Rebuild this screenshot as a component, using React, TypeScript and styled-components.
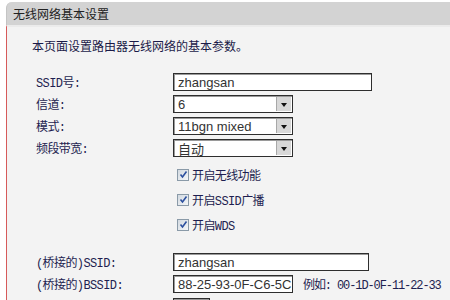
import * as React from 'react';
import styled, { createGlobalStyle } from 'styled-components';

const GlobalStyle = createGlobalStyle`
  html, body {
    margin: 0;
    padding: 0;
    background: #ffffff;
  }
  body {
    font-family: "Noto Sans CJK SC", sans-serif;
  }
`;

const Page = styled.div`
  width: 450px;
  height: 300px;
  overflow: hidden;
  padding: 2px 0 0 6px;
  box-sizing: border-box;
`;

const TitleBar = styled.div`
  height: 23px;
  display: flex;
  align-items: center;
  padding-left: 6px;
  background: #d3d3d3;
  border-top-left-radius: 6px;
  border-left: 1px solid #c4c4c4;
  font-size: 12px;
  color: #222;
`;

const Panel = styled.div`
  background: #f3f3f3;
  border-left: 1px solid #d65a5a;
  border-top: 2px solid #ebebeb;
  padding: 11px 0 0 25px;
  height: 280px;
  box-sizing: border-box;
`;

const Intro = styled.p`
  margin: 0;
  line-height: 16px;
  font-size: 12px;
  color: #1a1a48;
`;

const Form = styled.div`
  margin-top: 17px;
  padding-left: 4px;
  display: flex;
  flex-direction: column;
`;

const Row = styled.div<{ $h?: number }>`
  display: flex;
  align-items: center;
  height: ${(p) => p.$h ?? 22}px;
`;

const Label = styled.span`
  width: 137px;
  flex-shrink: 0;
  font-family: "Liberation Mono", "Noto Sans CJK SC", monospace;
  font-size: 12px;
  letter-spacing: -0.6px;
  color: #1e1e50;
`;

const Field = styled.div<{ $w: number; $bg?: string }>`
  width: ${(p) => p.$w}px;
  height: 18px;
  box-sizing: border-box;
  display: flex;
  align-items: center;
  border: 1px solid #2e2e2e;
  box-shadow: inset 1px 1px 0 #9a9a9a;
  background: ${(p) => p.$bg ?? '#ffffff'};
  font-family: "Liberation Sans", "Noto Sans CJK SC", sans-serif;
  font-size: 13px;
  color: #333;
  padding-left: 4px;
`;

const Value = styled.span`
  flex: 1;
  white-space: nowrap;
  overflow: hidden;
`;

const DropButton = styled.span`
  width: 15px;
  height: 14px;
  margin-right: 1px;
  box-sizing: border-box;
  display: flex;
  align-items: center;
  justify-content: center;
  background: #d8d8d8;
  border-left: 1px solid #a8a8a8;
`;

const Arrow = styled.span`
  width: 0;
  height: 0;
  border-left: 3px solid transparent;
  border-right: 3px solid transparent;
  border-top: 4px solid #111;
  margin-top: 1px;
`;

const CheckRow = styled(Row)`
  padding-left: 141px;
  gap: 3px;
`;

const Box = styled.span`
  width: 12px;
  height: 12px;
  box-sizing: border-box;
  border: 1px solid #8a9aa8;
  background: linear-gradient(135deg, #d2d9e0, #f4f6f8);
  display: flex;
  align-items: center;
  justify-content: center;
`;

const CheckText = styled.span`
  font-family: "Liberation Mono", "Noto Sans CJK SC", monospace;
  font-size: 12px;
  letter-spacing: -0.6px;
  color: #1e1e50;
`;

const Hint = styled.span`
  margin-left: 10px;
  font-family: "Liberation Mono", "Noto Sans CJK SC", monospace;
  font-size: 12px;
  letter-spacing: -1.1px;
  color: #1e1e50;
`;

const Gap = styled.div<{ $h: number }>`
  height: ${(p) => p.$h}px;
  flex-shrink: 0;
`;

const LastRow = styled(Row)`
  align-items: flex-start;
  padding-top: 3px;
`;

const Check = () => (
  <Box>
    <svg width="9" height="9" viewBox="0 0 9 9">
      <path d="M1.5 4.5 L3.5 7 L7.5 1.5" fill="none" stroke="#2c4f9e" strokeWidth="1.6" />
    </svg>
  </Box>
);

const Select: React.FC<{ value: string }> = ({ value }) => (
  <Field $w={120} style={{ paddingRight: 0 }}>
    <Value>{value}</Value>
    <DropButton>
      <Arrow />
    </DropButton>
  </Field>
);

export default function App() {
  return (
    <Page>
      <GlobalStyle />
      <TitleBar>无线网络基本设置</TitleBar>
      <Panel>
        <Intro>本页面设置路由器无线网络的基本参数。</Intro>
        <Form>
          <Row>
            <Label>SSID号:</Label>
            <Field $w={199}>
              <Value>zhangsan</Value>
            </Field>
          </Row>
          <Row>
            <Label>信道:</Label>
            <Select value="6" />
          </Row>
          <Row>
            <Label>模式:</Label>
            <Select value="11bgn mixed" />
          </Row>
          <Row>
            <Label>频段带宽:</Label>
            <Select value="自动" />
          </Row>
          <Gap $h={3} />
          <CheckRow $h={25}>
            <Check />
            <CheckText>开启无线功能</CheckText>
          </CheckRow>
          <CheckRow $h={25}>
            <Check />
            <CheckText>开启SSID广播</CheckText>
          </CheckRow>
          <CheckRow $h={25}>
            <Check />
            <CheckText>开启WDS</CheckText>
          </CheckRow>
          <Gap $h={14} />
          <Row>
            <Label>(桥接的)SSID:</Label>
            <Field $w={196}>
              <Value>zhangsan</Value>
            </Field>
          </Row>
          <Row>
            <Label>(桥接的)BSSID:</Label>
            <Field $w={120}>
              <Value>88-25-93-0F-C6-5C</Value>
            </Field>
            <Hint>例如: 00-1D-0F-11-22-33</Hint>
          </Row>
          <LastRow>
            <Label />
            <Field $w={37} $bg="#d9eef0" />
          </LastRow>
        </Form>
      </Panel>
    </Page>
  );
}
